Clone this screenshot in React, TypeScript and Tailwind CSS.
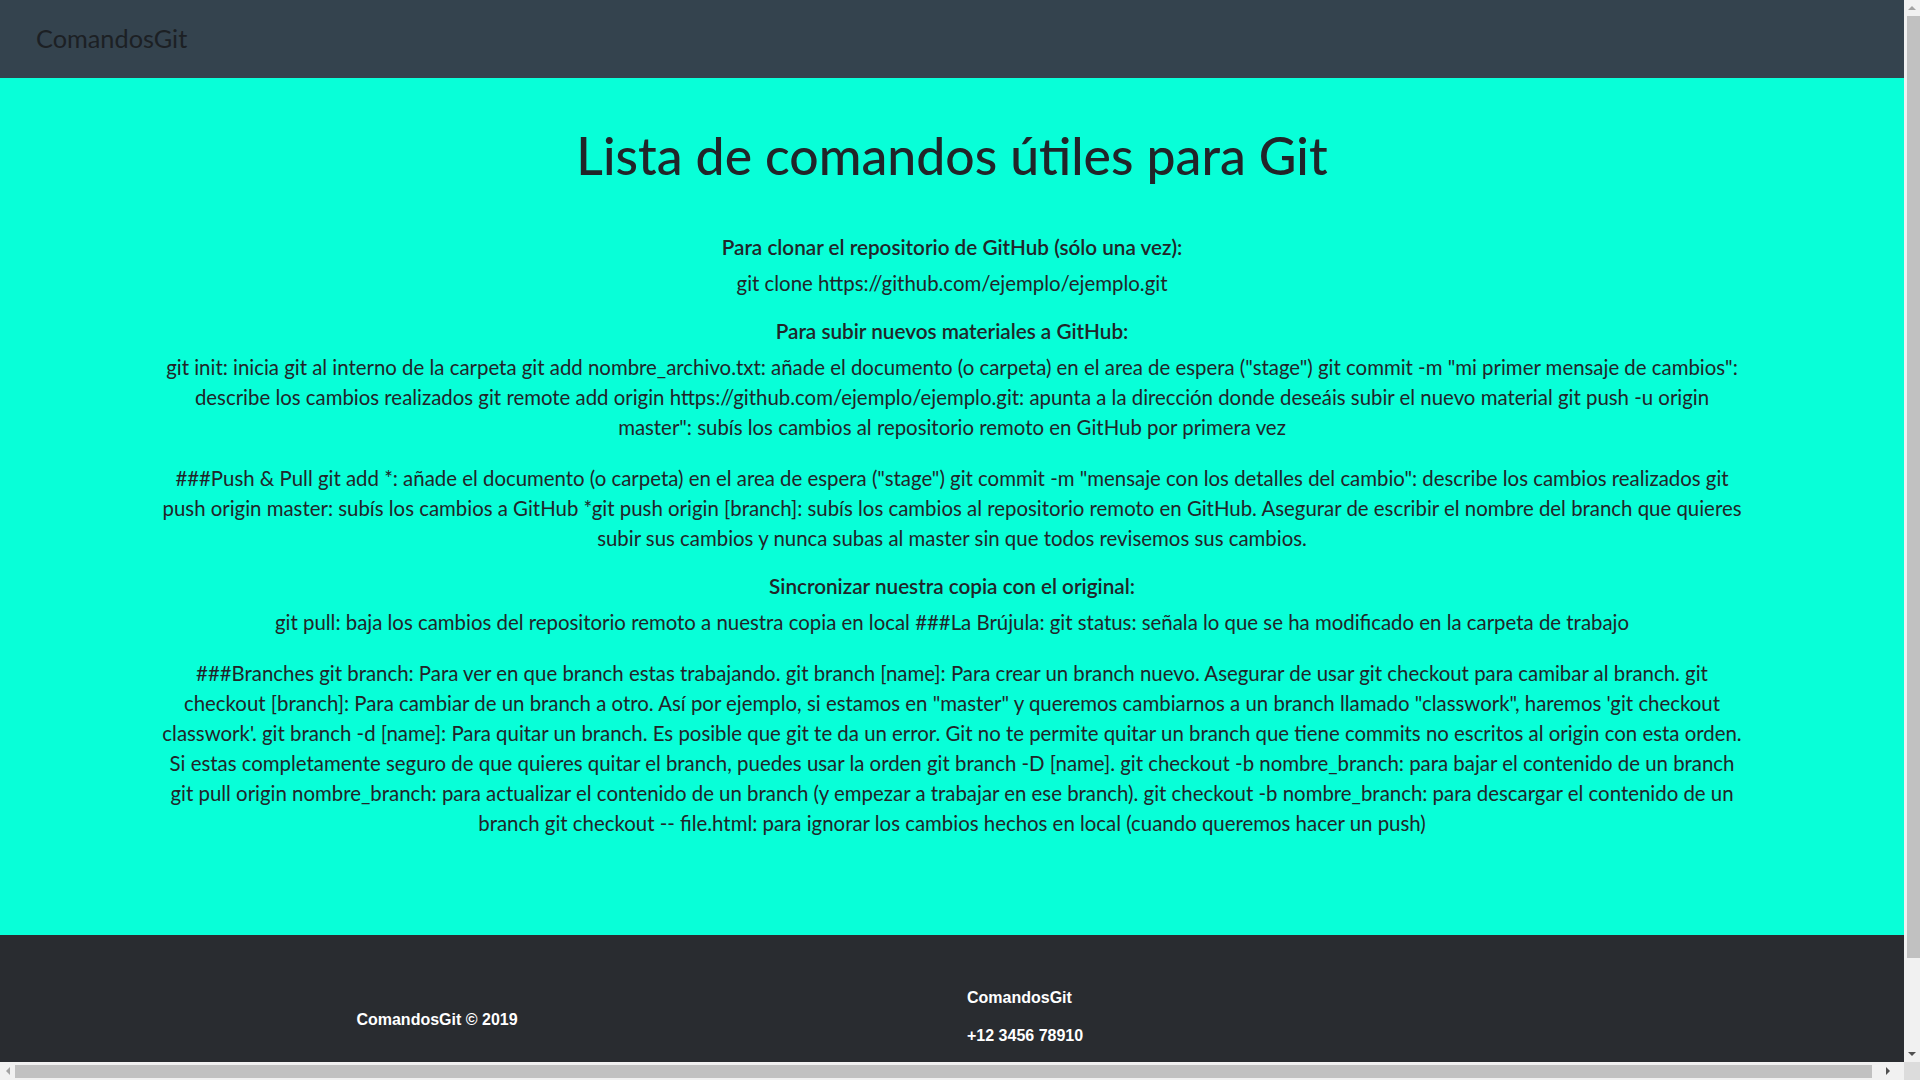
const lines = (rows: string[]) =>
  rows.map((row, i) => (
    <span key={i} className="block whitespace-nowrap">
      {row}
    </span>
  ));

function Heading({ children }: { children: string }) {
  return <h5 className="mb-[9px] text-[20.7px] leading-6 font-semibold">{children}</h5>;
}

function Para({ rows }: { rows: string[] }) {
  return <p className="mb-[21px] text-[20.4px] leading-[30px]">{lines(rows)}</p>;
}

function Arrow({ dir, dark }: { dir: "up" | "down" | "left" | "right"; dark?: boolean }) {
  const pts = {
    up: "0,5 4,1 8,5",
    down: "0,1 4,5 8,1",
    left: "5,0 1,4 5,8",
    right: "1,0 5,4 1,8",
  }[dir];
  const vertical = dir === "up" || dir === "down";
  return (
    <svg width={vertical ? 8 : 6} height={vertical ? 6 : 8} viewBox={vertical ? "0 0 8 6" : "0 0 6 8"}>
      <polygon points={pts} fill={dark ? "#505050" : "#a3a3a3"} />
    </svg>
  );
}

export default function App() {
  return (
    <div className="h-screen w-full flex flex-col overflow-hidden bg-[#f1f1f1]">
      <div className="flex flex-1 min-h-0">
        <div className="flex-1 min-w-0 overflow-hidden">
          <nav className="h-[78px] bg-[#34434e] flex items-center px-9">
            <span className="font-['Lato',sans-serif] text-[25.3px] text-[#1c2024]">ComandosGit</span>
          </nav>

          <main className="bg-[#08ffd8] text-[#212529] font-['Lato',sans-serif] text-center pt-[44px] pb-[76px]">
            <h1 className="text-[51.7px] leading-[67px] font-medium mb-[46px]">Lista de comandos útiles para Git</h1>

            <Heading>Para clonar el repositorio de GitHub (sólo una vez):</Heading>
            <Para rows={["git clone https://github.com/ejemplo/ejemplo.git"]} />

            <Heading>Para subir nuevos materiales a GitHub:</Heading>
            <Para
              rows={[
                'git init: inicia git al interno de la carpeta git add nombre_archivo.txt: añade el documento (o carpeta) en el area de espera ("stage") git commit -m "mi primer mensaje de cambios":',
                "describe los cambios realizados git remote add origin https://github.com/ejemplo/ejemplo.git: apunta a la dirección donde deseáis subir el nuevo material git push -u origin",
                'master": subís los cambios al repositorio remoto en GitHub por primera vez',
              ]}
            />
            <Para
              rows={[
                '###Push & Pull git add *: añade el documento (o carpeta) en el area de espera ("stage") git commit -m "mensaje con los detalles del cambio": describe los cambios realizados git',
                "push origin master: subís los cambios a GitHub *git push origin [branch]: subís los cambios al repositorio remoto en GitHub. Asegurar de escribir el nombre del branch que quieres",
                "subir sus cambios y nunca subas al master sin que todos revisemos sus cambios.",
              ]}
            />

            <Heading>Sincronizar nuestra copia con el original:</Heading>
            <Para
              rows={[
                "git pull: baja los cambios del repositorio remoto a nuestra copia en local ###La Brújula: git status: señala lo que se ha modificado en la carpeta de trabajo",
              ]}
            />
            <Para
              rows={[
                "###Branches git branch: Para ver en que branch estas trabajando. git branch [name]: Para crear un branch nuevo. Asegurar de usar git checkout para camibar al branch. git",
                'checkout [branch]: Para cambiar de un branch a otro. Así por ejemplo, si estamos en "master" y queremos cambiarnos a un branch llamado "classwork", haremos \'git checkout',
                "classwork'. git branch -d [name]: Para quitar un branch. Es posible que git te da un error. Git no te permite quitar un branch que tiene commits no escritos al origin con esta orden.",
                "Si estas completamente seguro de que quieres quitar el branch, puedes usar la orden git branch -D [name]. git checkout -b nombre_branch: para bajar el contenido de un branch",
                "git pull origin nombre_branch: para actualizar el contenido de un branch (y empezar a trabajar en ese branch). git checkout -b nombre_branch: para descargar el contenido de un",
                "branch git checkout -- file.html: para ignorar los cambios hechos en local (cuando queremos hacer un push)",
              ]}
            />
          </main>

          <footer className="bg-[#292c30] text-white font-['Liberation_Sans',Arial,sans-serif] font-bold text-base flex pt-[51px] pb-[80px]">
            <div className="w-[874px] flex items-center justify-center pt-[6px]">
              <span>ComandosGit © 2019</span>
            </div>
            <div className="ml-[93px] leading-6">
              <p className="mb-[14px]">ComandosGit</p>
              <p>+12 3456 78910</p>
            </div>
          </footer>
        </div>

        <div className="w-4 shrink-0 bg-[#f1f1f1] flex flex-col items-center">
          <div className="h-4 flex items-center justify-center">
            <Arrow dir="up" />
          </div>
          <div className="w-[13px] h-[942px] bg-[#c1c1c1] ml-[3px]" />
          <div className="flex-1" />
          <div className="h-4 flex items-center justify-center">
            <Arrow dir="down" dark />
          </div>
        </div>
      </div>

      <div className="h-[18px] shrink-0 flex">
        <div className="flex-1 flex items-center bg-[#f1f1f1]">
          <div className="w-[15px] flex items-center justify-center">
            <Arrow dir="left" />
          </div>
          <div className="h-[13px] w-[1857px] bg-[#c1c1c1]" />
          <div className="flex-1 flex items-center justify-center">
            <Arrow dir="right" dark />
          </div>
        </div>
        <div className="w-4 bg-[#dcdcdc]" />
      </div>
    </div>
  );
}
